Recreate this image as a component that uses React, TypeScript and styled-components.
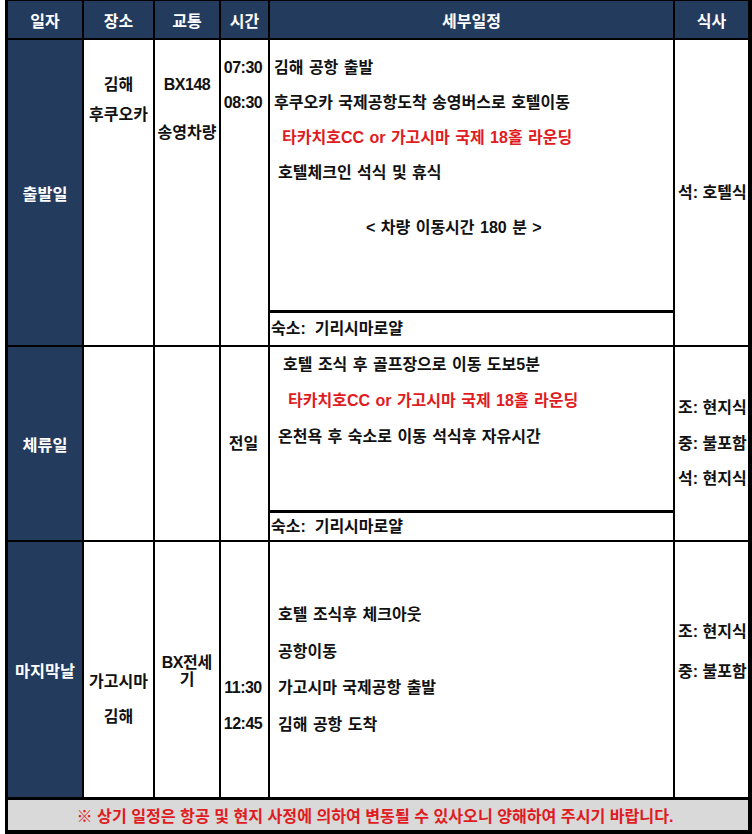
import React from 'react';
import styled, { createGlobalStyle } from 'styled-components';

const NAVY = '#233c5e';
const RED = '#e01b22';

const GlobalStyle = createGlobalStyle`
  body {
    margin: 0;
    background: #fff;
    font-family: "Liberation Sans", "Noto Sans CJK KR", sans-serif;
  }
`;

const Sheet = styled.div`
  width: 740px;
  margin-left: 5px;
  border-style: solid;
  border-color: #000;
  border-width: 1px 4px 4px 3px;
  background: #000;
  font-size: 16px;
  font-weight: 700;
  color: #111;
`;

const Grid = styled.div`
  display: grid;
  grid-template-columns: 74px 69px 64px 47px 403px 73px;
  grid-template-rows: 37px 305px 193px 255px;
  gap: 2px;
`;

const HeadCell = styled.div`
  background: ${NAVY};
  color: #fff;
  display: flex;
  align-items: center;
  justify-content: center;
  white-space: nowrap;
`;

const DayCell = styled(HeadCell)`
  font-size: 16.3px;
`;

// a white cell holding a stack of lines; $top pushes the first line down, $pitch is the line spacing
const Cell = styled.div<{
  $top?: number;
  $pitch?: number;
  $center?: boolean;
  $left?: boolean;
  $padR?: number;
}>`
  background: #fff;
  display: flex;
  flex-direction: column;
  justify-content: ${({ $center }) => ($center ? 'center' : 'flex-start')};
  align-items: ${({ $left }) => ($left ? 'flex-start' : 'center')};
  padding: ${({ $top }) => $top ?? 0}px ${({ $padR }) => $padR ?? 0}px 0
    ${({ $left }) => ($left ? 3 : 0)}px;
  line-height: ${({ $pitch }) => $pitch ?? 36}px;
  white-space: nowrap;
`;

// flight codes and times are set a little tighter in the sheet
const Code = styled.span`
  letter-spacing: -0.5px;
`;

const Plan = styled.div<{ $top: number; $pitch: number }>`
  background: #fff;
  display: flex;
  flex-direction: column;
  padding-top: ${({ $top }) => $top}px;
  line-height: ${({ $pitch }) => $pitch}px;
  word-spacing: 1px;
  white-space: nowrap;
`;

const Line = styled.div<{ $indent?: number; $red?: boolean }>`
  padding-left: ${({ $indent }) => $indent ?? 8}px;
  color: ${({ $red }) => ($red ? RED : 'inherit')};
`;

const Note = styled.div`
  margin-top: 20px;
  padding-left: 96px;
`;

const Lodging = styled.div<{ $h: number }>`
  margin-top: auto;
  height: ${({ $h }) => $h}px;
  line-height: ${({ $h }) => $h}px;
  border-top: 3px solid #000;
  padding-left: 1px;
  white-space: pre;
  word-spacing: 0;
`;

const Footer = styled.div`
  height: 30px;
  margin-top: 1px;
  border-top: 2px solid #000;
  background: #d9d9d9;
  color: ${RED};
  font-size: 16.1px;
  display: flex;
  align-items: center;
  justify-content: center;
  padding-right: 6px;
  white-space: nowrap;
`;

const headers = ['일자', '장소', '교통', '시간', '세부일정', '식사'];

export default function App() {
  return (
    <>
      <GlobalStyle />
      <Sheet>
        <Grid>
          {headers.map((h) => (
            <HeadCell key={h}>{h}</HeadCell>
          ))}

          {/* 출발일 */}
          <DayCell>출발일</DayCell>
          <Cell $top={30} $pitch={30}>
            <div>김해</div>
            <div>후쿠오카</div>
          </Cell>
          <Cell $top={21} $pitch={48}>
            <Code>BX148</Code>
            <div>송영차량</div>
          </Cell>
          <Cell $top={10} $pitch={35} $padR={3}>
            <Code>07:30</Code>
            <Code>08:30</Code>
          </Cell>
          <Plan $top={10} $pitch={35}>
            <Line $indent={4}>김해 공항 출발</Line>
            <Line $indent={4}>후쿠오카 국제공항도착 송영버스로 호텔이동</Line>
            <Line $indent={12} $red>타카치호CC or 가고시마 국제 18홀 라운딩</Line>
            <Line $indent={8}>호텔체크인 석식 및 휴식</Line>
            <Note>&lt; 차량 이동시간 180 분 &gt;</Note>
            <Lodging $h={32}>숙소:  기리시마로얄</Lodging>
          </Plan>
          <Cell $center $left $pitch={36}>
            <div>석: 호텔식</div>
          </Cell>

          {/* 체류일 */}
          <DayCell>체류일</DayCell>
          <Cell />
          <Cell />
          <Cell $center $padR={2}>
            <div>전일</div>
          </Cell>
          <Plan $top={0} $pitch={36}>
            <Line $indent={13}>호텔 조식 후 골프장으로 이동 도보5분</Line>
            <Line $indent={18} $red>타카치호CC or 가고시마 국제 18홀 라운딩</Line>
            <Line $indent={8}>온천욕 후 숙소로 이동 석식후 자유시간</Line>
            <Lodging $h={27}>숙소:  기리시마로얄</Lodging>
          </Plan>
          <Cell $center $left $pitch={35.5}>
            <div>조: 현지식</div>
            <div>중: 불포함</div>
            <div>석: 현지식</div>
          </Cell>

          {/* 마지막날 */}
          <DayCell>마지막날</DayCell>
          <Cell $top={122} $pitch={35}>
            <div>가고시마</div>
            <div>김해</div>
          </Cell>
          <Cell $top={112} $pitch={17}>
            <div>
              <Code>BX</Code>전세
            </div>
            <div>기</div>
          </Cell>
          <Cell $top={128} $pitch={36} $padR={3}>
            <Code>11:30</Code>
            <Code>12:45</Code>
          </Cell>
          <Plan $top={55} $pitch={36.5}>
            <Line $indent={8}>호텔 조식후 체크아웃</Line>
            <Line $indent={8}>공항이동</Line>
            <Line $indent={8}>가고시마 국제공항 출발</Line>
            <Line $indent={8}>김해 공항 도착</Line>
          </Plan>
          <Cell $top={70} $left $pitch={40}>
            <div>조: 현지식</div>
            <div>중: 불포함</div>
          </Cell>
        </Grid>
        <Footer>※ 상기 일정은 항공 및 현지 사정에 의하여 변동될 수 있사오니 양해하여 주시기 바랍니다.</Footer>
      </Sheet>
    </>
  );
}
